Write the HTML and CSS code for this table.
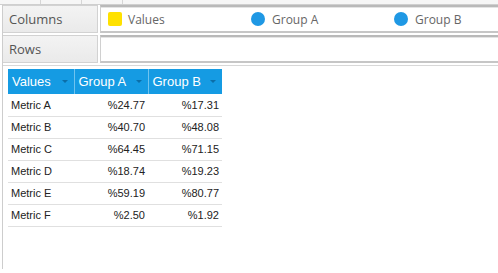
FILE: index.html
```html
<!DOCTYPE html>
<html>
<head>
<meta charset="utf-8">
<link rel="stylesheet" href="styles.css">
</head>
<body>
<div class="topstrip">
  <span class="seg"></span><span class="seg"></span><span class="seg"></span>
</div>
<div class="pivot">
  <div class="prow">
    <div class="plabel">Columns</div>
    <div class="pzone">
      <div class="chip"><span class="sq"></span>Values</div>
      <div class="chip"><span class="dot"></span>Group A</div>
      <div class="chip"><span class="dot"></span>Group B</div>
    </div>
  </div>
  <div class="prow">
    <div class="plabel">Rows</div>
    <div class="pzone"></div>
  </div>
  <div class="grid">
    <table>
      <thead>
        <tr>
          <th class="c1">Values<span class="arr"></span></th>
          <th class="c2">Group A<span class="arr"></span></th>
          <th class="c3">Group B<span class="arr"></span></th>
        </tr>
      </thead>
      <tbody>
        <tr><td>Metric A</td><td class="n">%24.77</td><td class="n">%17.31</td></tr>
        <tr><td>Metric B</td><td class="n">%40.70</td><td class="n">%48.08</td></tr>
        <tr><td>Metric C</td><td class="n">%64.45</td><td class="n">%71.15</td></tr>
        <tr><td>Metric D</td><td class="n">%18.74</td><td class="n">%19.23</td></tr>
        <tr><td>Metric E</td><td class="n">%59.19</td><td class="n">%80.77</td></tr>
        <tr><td>Metric F</td><td class="n">%2.50</td><td class="n">%1.92</td></tr>
      </tbody>
    </table>
  </div>
</div>
</body>
</html>
```
FILE: styles.css
```css
html, body {
  margin: 0;
  padding: 0;
  background: #fff;
  width: 498px;
  height: 273px;
  overflow: hidden;
}
body {
  font-family: "Open Sans", "Liberation Sans", sans-serif;
}
.topstrip {
  height: 4px;
  background: #f6f6f6;
  border-bottom: 1px solid #cfcfcf;
  display: flex;
}
.seg {
  width: 40px;
  border-right: 1px solid #d6d6d6;
}
.pivot {
  margin-left: 2px;
  border-left: 1px solid #cdcdcd;
  height: 264px;
}
.prow {
  display: flex;
  height: 28px;
  margin-bottom: 2px;
}
.plabel {
  flex: 0 0 88px;
  padding-left: 6px;
  background: linear-gradient(#f3f3f3, #eaeaea);
  border: 1px solid #d2d2d2;
  border-left: none;
  color: #555;
  font-size: 13px;
  line-height: 26px;
}
.pzone {
  flex: 1;
  min-width: 0;
  overflow: hidden;
  margin-left: 2px;
  border-top: 2px solid #b9b9b9;
  border-bottom: 2px solid #c6c6c6;
  border-left: 1px solid #d0d0d0;
  box-shadow: inset 0 1px 0 #e4e4e4;
  background: #fff;
  display: flex;
  align-items: center;
}
.chip {
  flex: 0 0 143px;
  padding-left: 7px;
  box-sizing: border-box;
  display: flex;
  align-items: center;
  color: #666;
  font-size: 12px;
}
.chip:last-child {
  flex: 1 1 auto;
  min-width: 0;
}
.sq {
  width: 14px;
  height: 14px;
  border-radius: 2px;
  background: #ffe100;
  margin-right: 6px;
}
.dot {
  width: 14px;
  height: 14px;
  border-radius: 50%;
  background: #1f98e4;
  margin-right: 7px;
}
.grid {
  border-top: 1px solid #d8d8d8;
  margin-top: 1px;
  padding: 3px 0 0 5px;
}
table {
  border-collapse: collapse;
  font-family: "Liberation Sans", Arial, sans-serif;
}
th {
  background: #159be3;
  color: #fff;
  font-weight: normal;
  font-size: 13px;
  text-align: left;
  height: 25px;
  padding: 0 4px;
  border-right: 1px solid #6fc3ef;
  position: relative;
  box-sizing: border-box;
}
th.c1 { width: 66px; }
th.c2 { width: 74px; }
th.c3 { width: 74px; border-right: none; }
.arr {
  position: absolute;
  right: 6px;
  top: 11px;
  width: 0;
  height: 0;
  border-left: 3px solid transparent;
  border-right: 3px solid transparent;
  border-top: 3px solid #0b6ea8;
}
td {
  font-size: 11px;
  color: #222;
  height: 22px;
  padding: 0 3px;
  border-bottom: 1px solid #e0e0e0;
  box-sizing: border-box;
}
td.n {
  text-align: right;
}
```
